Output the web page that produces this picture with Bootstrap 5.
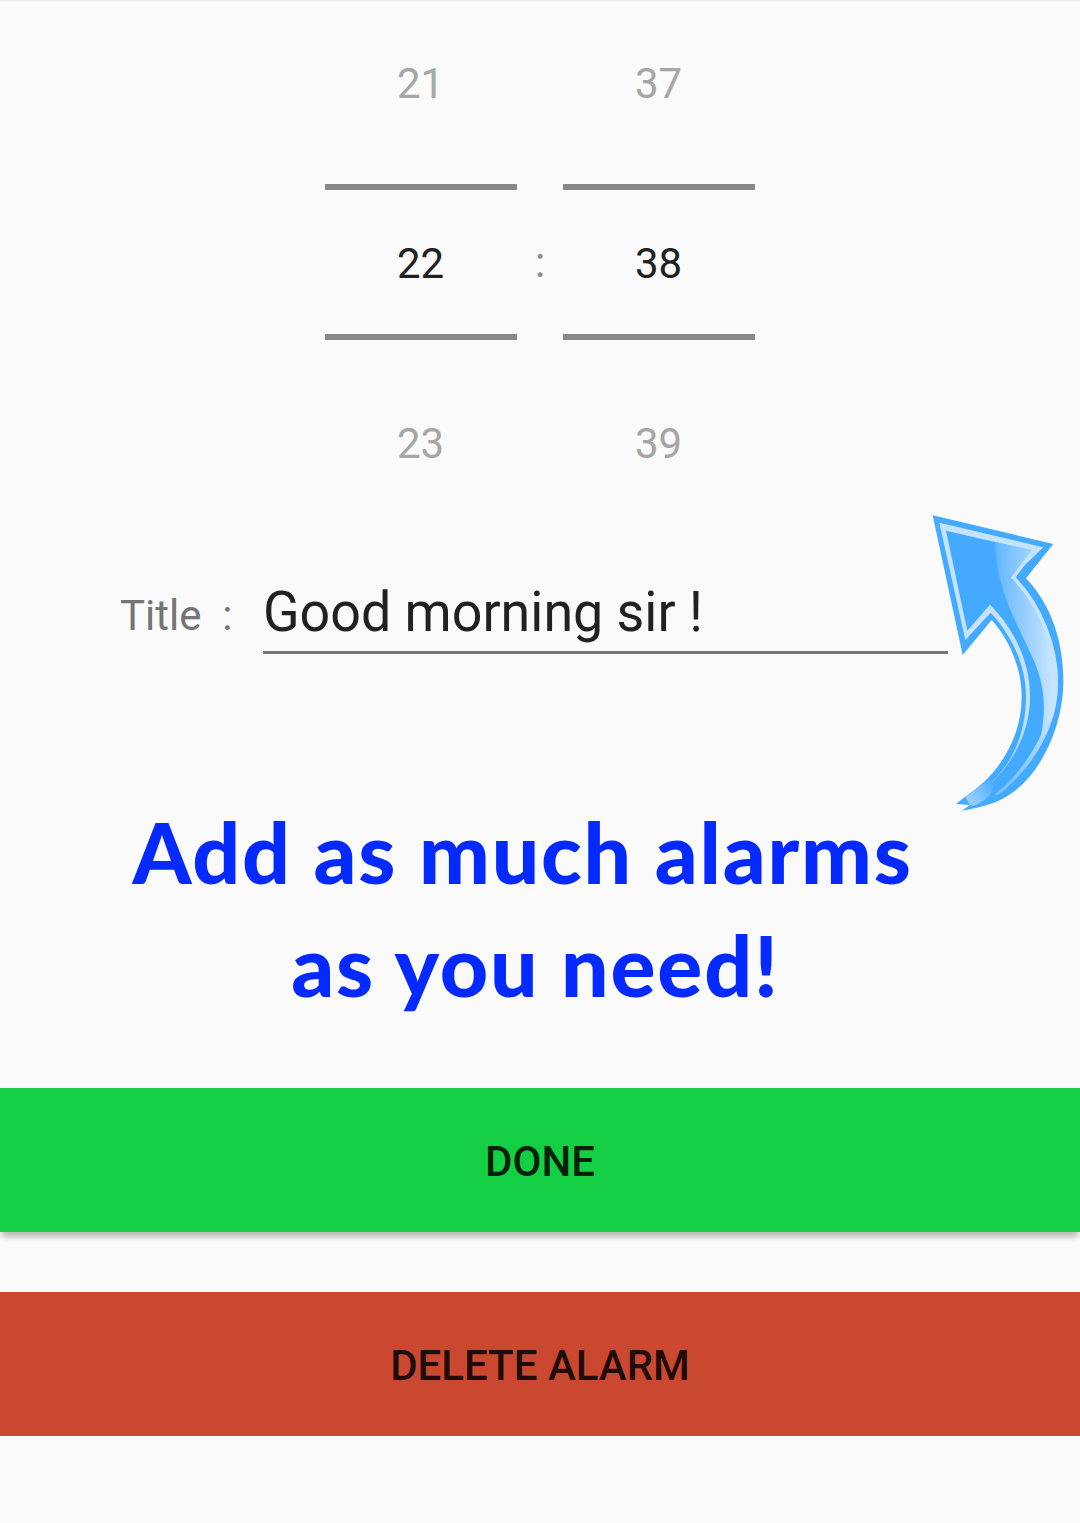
<!DOCTYPE html>
<html lang="en">
<head>
<meta charset="utf-8">
<title>Alarm</title>
<link href="https://cdn.jsdelivr.net/npm/bootstrap@5.3.0/dist/css/bootstrap.min.css" rel="stylesheet">
<style>
html,body{background:#fafafa;font-family:Roboto,"Liberation Sans",sans-serif;}
.screen{width:1080px;height:1523px;overflow:hidden;background:#fafafa;box-shadow:inset 0 3px 3px -2px rgba(0,0,0,.08);}
.wheel{width:192px;font-size:42px;line-height:60px;text-align:center;padding-right:1px;}
.cell-far{color:#a6a6a6;}
.cell-top{height:184px;padding-top:54px;}
.cell-bottom{height:133px;padding-top:74px;}
.cell-mid{height:156px;width:192px;border-top:6px solid #888888;border-bottom:6px solid #888888;color:#212121;padding-top:44px;padding-right:1px;}
.sep{width:46px;font-size:42px;line-height:60px;color:#8a8a8a;text-align:center;margin-top:233px;}
.title-row{padding-left:120px;margin-top:81px;height:100px;}
.title-lbl{width:143px;font-size:42px;line-height:60px;color:#757575;padding-bottom:8px;white-space:pre;}
.title-val{width:685px;height:100px;font-size:56px;line-height:76px;color:#212121;border-bottom:3px solid #757575;padding-top:20px;}
.title-txt{display:inline-block;transform:scaleX(.96);transform-origin:left center;white-space:nowrap;}
.promo{margin-top:141px;font-family:Lato,"Liberation Sans",sans-serif;font-weight:900;font-size:84px;line-height:113px;letter-spacing:1.8px;color:#052aff;text-align:center;}
.promo-a{padding-right:35px;}
.promo-b{padding-right:9px;}
.act{display:block;width:100%;height:144px;border:0;border-radius:0;font-family:Roboto,sans-serif;font-weight:500;font-size:42px;color:rgba(0,0,0,.87);text-transform:uppercase;padding-top:8px;}
.act-go,.act-go:hover{background:#14ce44;box-shadow:0 6px 6px -1px rgba(0,0,0,.2),0 9px 6px -4px rgba(0,0,0,.07);margin-top:67px;}
.act-del,.act-del:hover{background:#cb4830;margin-top:60px;}
.swoosh{position:absolute;left:920px;top:500px;width:160px;height:320px;}
</style>
</head>
<body class="m-0">
<div class="screen position-relative">
  <div class="d-flex justify-content-center">
    <div class="wheel">
      <div class="cell-far cell-top">21</div>
      <div class="cell-mid">22</div>
      <div class="cell-far cell-bottom">23</div>
    </div>
    <div class="sep">:</div>
    <div class="wheel">
      <div class="cell-far cell-top">37</div>
      <div class="cell-mid">38</div>
      <div class="cell-far cell-bottom">39</div>
    </div>
  </div>
  <div class="title-row d-flex align-items-end">
    <div class="title-lbl">Title  :</div>
    <div class="title-val"><span class="title-txt">Good morning sir !</span></div>
  </div>
  <div class="promo">
    <div class="promo-a">Add as much alarms</div>
    <div class="promo-b">as you need!</div>
  </div>
  <button type="button" class="btn act act-go">Done</button>
  <button type="button" class="btn act act-del">Delete alarm</button>
  <svg class="swoosh" viewBox="0 0 480 960" aria-hidden="true">
    <defs>
      <linearGradient id="hl" x1="225" y1="0" x2="415" y2="0" gradientUnits="userSpaceOnUse">
        <stop offset="0" stop-color="#62b6ff"/>
        <stop offset="1" stop-color="#d2e9ff"/>
      </linearGradient>
      <linearGradient id="lt" x1="0" y1="650" x2="0" y2="885" gradientUnits="userSpaceOnUse">
        <stop offset="0" stop-color="#c5e3ff"/>
        <stop offset="1" stop-color="#74bfff"/>
      </linearGradient>
      <linearGradient id="tl" x1="130" y1="905" x2="225" y2="840" gradientUnits="userSpaceOnUse">
        <stop offset="0" stop-color="#a8d6ff"/>
        <stop offset="1" stop-color="#44aaff"/>
      </linearGradient>
    </defs>
    <path fill="#44aaff" d="M38 46 L400 132 L318 235 C400 320 432 440 430 550 C428 700 340 880 200 915 C170 925 145 928 125 932 L150 915 L108 912 L135 890 C230 830 305 720 305 590 C305 500 265 415 215 360 L128 465 Z"/>
    <path fill="url(#lt)" d="M58 68 L370 142 L276 232 C365 320 414 440 414 550 C414 680 340 800 235 885 L170 880 C250 830 318 730 318 590 C318 490 270 400 212 338 L136 420 Z"/>
    <path fill="#44aaff" d="M78 92 L340 152 L262 232 C350 320 398 440 398 550 C398 680 320 810 215 890 L175 880 C255 825 330 720 330 590 C330 480 280 385 210 314 L142 392 Z"/>
    <path fill="url(#hl)" d="M225 126 L342 152 L276 232 C365 320 400 440 400 550 C400 620 385 670 362 715 C376 640 378 570 345 490 C310 400 230 290 225 126 Z"/>
    <path fill="none" stroke="#c5e3ff" stroke-width="11" d="M342 150 L280 232 C365 320 409 440 409 550"/>
    <path fill="url(#tl)" d="M135 890 C165 872 190 850 210 835 C225 850 225 870 205 890 C185 908 165 920 150 915 Z"/>
  </svg>
</div>
<script src="https://cdn.jsdelivr.net/npm/bootstrap@5.3.0/dist/js/bootstrap.bundle.min.js"></script>
</body>
</html>
